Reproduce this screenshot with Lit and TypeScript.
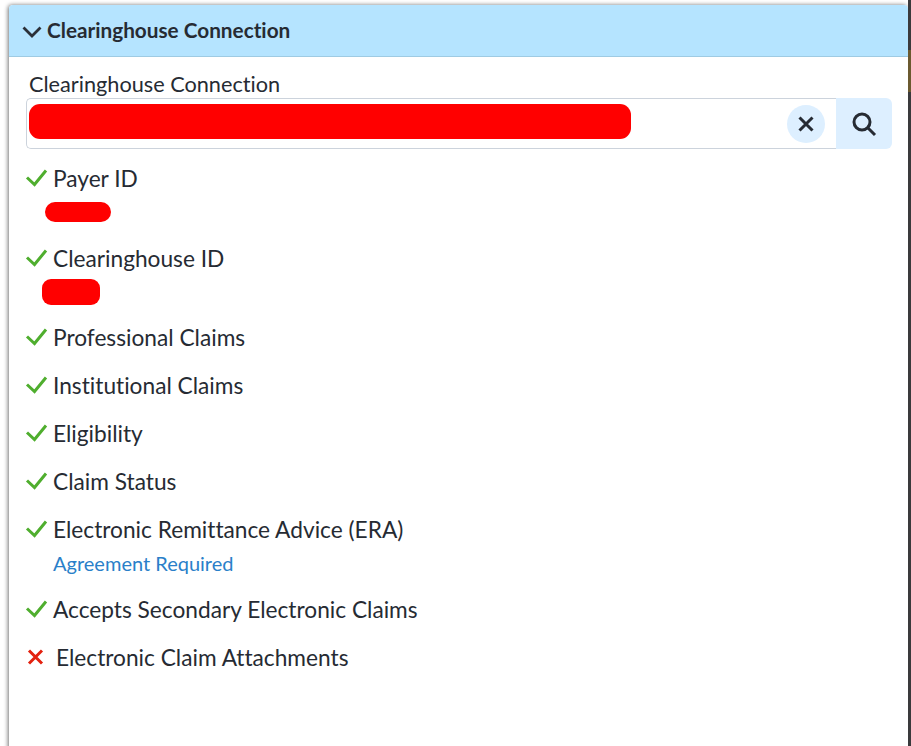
import { LitElement, html, css, svg } from 'lit';
import { customElement } from 'lit/decorators.js';

interface Row {
  label: string;
  ok: boolean;
  note?: string;
  redact?: 'payer' | 'clearinghouse';
}

const rows: Row[] = [
  { label: 'Payer ID', ok: true, redact: 'payer' },
  { label: 'Clearinghouse ID', ok: true, redact: 'clearinghouse' },
  { label: 'Professional Claims', ok: true },
  { label: 'Institutional Claims', ok: true },
  { label: 'Eligibility', ok: true },
  { label: 'Claim Status', ok: true },
  { label: 'Electronic Remittance Advice (ERA)', ok: true, note: 'Agreement Required' },
  { label: 'Accepts Secondary Electronic Claims', ok: true },
  { label: 'Electronic Claim Attachments', ok: false },
];

const check = svg`<path d="M2 12.5 L9.5 19.5 L21 5.5" fill="none" stroke="#4fae2e" stroke-width="3" />`;
const cross = svg`<path d="M4 6.5 L17 19.5 M17 6.5 L4 19.5" fill="none" stroke="#e3210f" stroke-width="3" />`;

@customElement('app-root')
export class AppRoot extends LitElement {
  static styles = css`
    :host {
      display: block;
      position: relative;
      height: 746px;
      overflow: hidden;
      background: #fff;
      padding: 5px 0 0 9px;
      box-sizing: border-box;
      font-family: 'Lato', 'Noto Sans', sans-serif;
      font-variant-ligatures: none;
      color: #262b33;
    }
    .edge {
      position: absolute;
      top: 0;
      right: 0;
      bottom: 0;
      width: 3px;
      background: linear-gradient(#3a3a3c 50px, #6b5a30 50px, #6b5a30 92px, #3a3a3c 92px);
    }
    .card {
      width: 899px;
      height: 760px;
      background: #fff;
      border-radius: 4px 4px 0 0;
      box-shadow: -1px 0 4px rgba(0, 0, 0, 0.55);
    }
    .header {
      height: 52px;
      box-sizing: border-box;
      display: flex;
      align-items: center;
      gap: 5px;
      padding: 0 0 0 13px;
      background: #b5e4ff;
      border-bottom: 1px solid #9fcbe3;
      border-radius: 4px 4px 0 0;
      font-size: 20.75px;
      font-weight: 700;
    }
    .header span {
      margin-top: -2px;
    }
    .header svg {
      width: 20px;
      height: 12px;
      margin-top: 2px;
    }
    .body {
      padding: 12px 16px 0 17px;
    }
    .field-label {
      font-size: 21.7px;
      line-height: 30px;
      padding-left: 3px;
    }
    .search {
      display: flex;
      height: 51px;
      box-sizing: border-box;
      margin-top: -1px;
      margin-bottom: 14px;
    }
    .input {
      flex: 1;
      display: flex;
      align-items: center;
      justify-content: space-between;
      box-sizing: border-box;
      padding: 0 11px 0 2px;
      border: 1px solid #ccd3dc;
      border-right: 0;
      border-radius: 5px 0 0 5px;
    }
    .redact {
      background: #ff0000;
    }
    .redact-name {
      width: 602px;
      height: 35px;
      border-radius: 11px;
      margin-bottom: 4px;
    }
    .clear {
      width: 38px;
      height: 38px;
      border-radius: 50%;
      background: #ddefff;
      display: flex;
      align-items: center;
      justify-content: center;
    }
    .go {
      width: 56px;
      background: #ddefff;
      border-radius: 0 6px 6px 0;
      display: flex;
      align-items: center;
      justify-content: center;
    }
    .rows {
      display: flex;
      flex-direction: column;
      gap: 16px;
    }
    .row-main {
      display: flex;
      align-items: center;
      height: 32px;
      margin-left: -1px;
      font-size: 22.7px;
      line-height: 32px;
    }
    .row-main span {
      margin-top: -1px;
    }
    .row-main svg {
      width: 24px;
      height: 24px;
      flex: none;
      margin-right: 4px;
      margin-top: -5px;
    }
    .row.bad .row-main svg {
      margin-right: 7px;
    }
    .note {
      font-size: 20px;
      line-height: 22px;
      margin: 6px 0 4px 27px;
      color: #2a7fc9;
    }
    .redact-payer {
      width: 66px;
      height: 20px;
      border-radius: 10px;
      margin: 7px 0 5px 19px;
    }
    .redact-clearinghouse {
      width: 58px;
      height: 26px;
      border-radius: 9px;
      margin: 4px 0 1px 16px;
    }
  `;

  private renderRow(row: Row) {
    return html`<div class="row ${row.ok ? '' : 'bad'}">
      <div class="row-main">
        <svg viewBox="0 0 24 24">${row.ok ? check : cross}</svg>
        <span>${row.label}</span>
      </div>
      ${row.redact ? html`<div class="redact redact-${row.redact}"></div>` : ''}
      ${row.note ? html`<div class="note">${row.note}</div>` : ''}
    </div>`;
  }

  render() {
    return html`<div class="card">
        <div class="header">
          <svg viewBox="0 0 20 12"><path d="M1.5 1.5 L10 10 L18.5 1.5" fill="none" stroke="#2b3038" stroke-width="2.8" /></svg>
          <span>Clearinghouse Connection</span>
        </div>
        <div class="body">
          <div class="field-label">Clearinghouse Connection</div>
          <div class="search">
            <div class="input">
              <div class="redact redact-name"></div>
              <div class="clear">
                <svg width="18" height="18" viewBox="0 0 18 18"><path d="M2.5 2.5 L15.5 15.5 M15.5 2.5 L2.5 15.5" fill="none" stroke="#262b33" stroke-width="3" /></svg>
              </div>
            </div>
            <div class="go">
              <svg width="26" height="26" viewBox="0 0 26 26"><circle cx="11" cy="11" r="8" fill="none" stroke="#262b33" stroke-width="3" /><path d="M17 17 L24 24" fill="none" stroke="#262b33" stroke-width="3" /></svg>
            </div>
          </div>
          <div class="rows">${rows.map((r) => this.renderRow(r))}</div>
        </div>
      </div>
      <div class="edge"></div>`;
  }
}
